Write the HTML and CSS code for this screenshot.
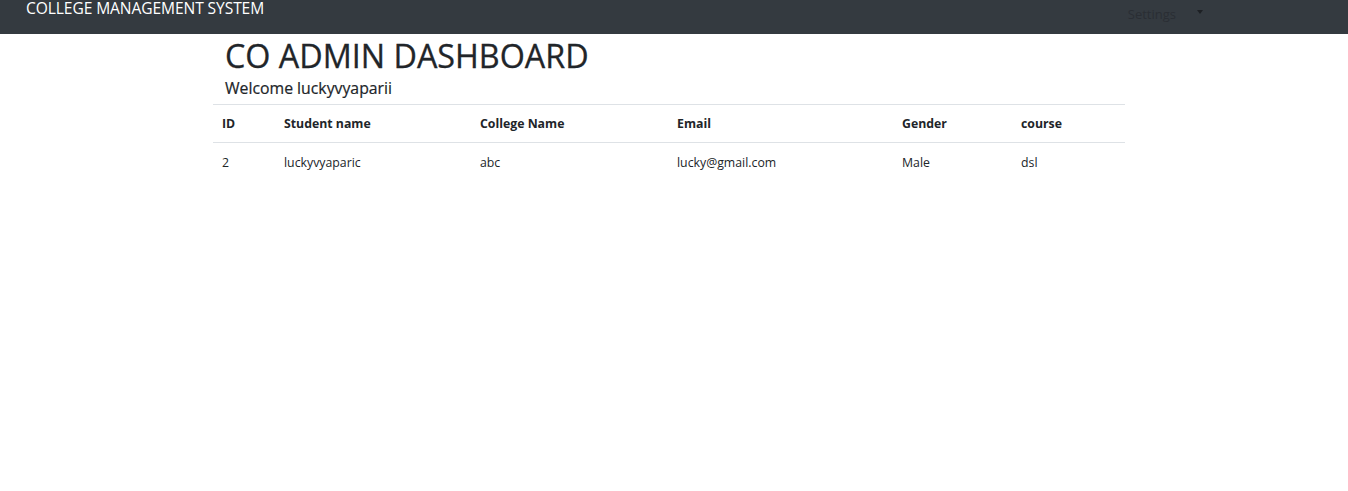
FILE: index.html
```html
<!DOCTYPE html>
<html>
<head>
<meta charset="utf-8">
<link rel="stylesheet" href="styles.css">
</head>
<body>
<nav class="navbar">
  <div class="brand">COLLEGE MANAGEMENT SYSTEM</div>
  <div class="settings"><span>Settings</span><span class="caret"></span></div>
</nav>
<main class="container">
  <h1 class="title">CO ADMIN DASHBOARD</h1>
  <h5 class="welcome">Welcome luckyvyaparii</h5>
  <table class="table">
    <thead>
      <tr>
        <th class="c-id">ID</th>
        <th class="c-name">Student name</th>
        <th class="c-college">College Name</th>
        <th class="c-email">Email</th>
        <th class="c-gender">Gender</th>
        <th class="c-course">course</th>
      </tr>
    </thead>
    <tbody>
      <tr>
        <td>2</td>
        <td>luckyvyaparic</td>
        <td>abc</td>
        <td>lucky@gmail.com</td>
        <td>Male</td>
        <td>dsl</td>
      </tr>
    </tbody>
  </table>
</main>
</body>
</html>
```
FILE: styles.css
```css
* { box-sizing: border-box; }
body {
  margin: 0;
  font-family: "Open Sans", "Noto Sans", sans-serif;
  color: #212529;
  background: #fff;
}
.navbar {
  height: 34px;
  background: #343a40;
  display: flex;
  align-items: flex-start;
  padding-left: 26px;
}
.brand {
  color: #fff;
  font-size: 15.6px;
  line-height: 18px;
  letter-spacing: -0.1px;
  margin-top: -1px;
}
.settings {
  margin-left: auto;
  margin-right: 145px;
  display: flex;
  align-items: center;
  height: 27px;
  color: #2a2e34;
  font-size: 13px;
  padding-left: 2px;
}
.caret {
  display: inline-block;
  margin-left: 21px;
  width: 0;
  height: 0;
  border-left: 3px solid transparent;
  border-right: 3px solid transparent;
  border-top: 4px solid #1d2024;
  margin-top: -3px;
}
.container {
  margin-left: 213px;
  width: 912px;
}
.title {
  margin: 0;
  padding-left: 12px;
  font-size: 32.3px;
  font-weight: 500;
  line-height: 42px;
  padding-top: 0;
  -webkit-text-stroke: 0.3px #212529;
}
.welcome {
  margin: 0;
  padding-left: 12px;
  font-size: 15.8px;
  font-weight: 400;
  line-height: 22px;
  padding-top: 1px;
  height: 28px;
  -webkit-text-stroke: 0.2px #212529;
}
.table {
  width: 100%;
  border-collapse: collapse;
  font-size: 12.3px;
}
.table th, .table td {
  text-align: left;
  padding: 0 0 0 9px;
  vertical-align: middle;
}
.table th {
  height: 38px;
  font-weight: 700;
  border-top: 1px solid #dee2e6;
  border-bottom: 1px solid #dee2e6;
}
.table td {
  height: 39px;
}
.c-id { width: 62px; }
.c-name { width: 196px; }
.c-college { width: 197px; }
.c-email { width: 225px; }
.c-gender { width: 119px; }
```
